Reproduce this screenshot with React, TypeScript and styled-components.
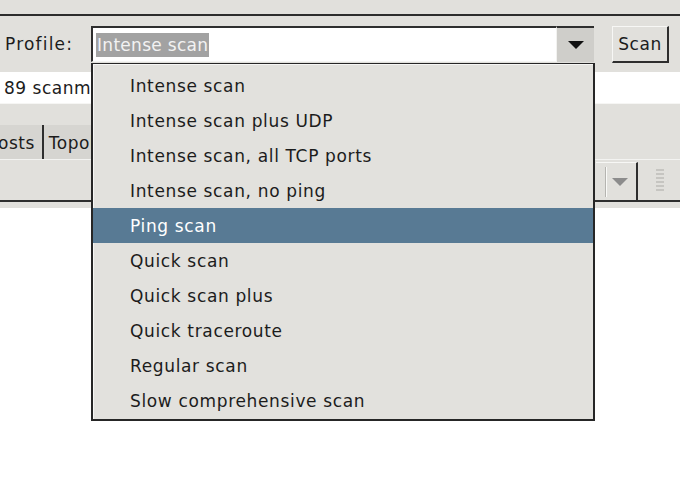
import React from 'react'
import styled, { createGlobalStyle } from 'styled-components'

const profiles = [
  'Intense scan',
  'Intense scan plus UDP',
  'Intense scan, all TCP ports',
  'Intense scan, no ping',
  'Ping scan',
  'Quick scan',
  'Quick scan plus',
  'Quick traceroute',
  'Regular scan',
  'Slow comprehensive scan',
]

const selected = 'Ping scan'

const App: React.FC = () => {
  return (
    <>
      <GlobalStyle />
      <Window>
        <TopStrip />
        <ProfileRow>
          <Label>Profile:</Label>
          <Combo>
            <Entry>
              <Selection>Intense scan</Selection>
            </Entry>
            <ArrowButton>
              <Triangle $color='#111' />
            </ArrowButton>
          </Combo>
          <ScanButton>Scan</ScanButton>
        </ProfileRow>
        <CommandRow>
          <span>89 scanme.nmap.org</span>
        </CommandRow>
        <Spacer />
        <TabsRow>
          <Tab>osts</Tab>
          <Tab>Topology</Tab>
        </TabsRow>
        <ToolbarRow>
          <FilterButton>
            <GrooveLine />
            <Triangle $color='#8c8c8c' />
          </FilterButton>
          <Grip>
            {[0, 1, 2, 3, 4, 5].map(i => <GripDot key={i} />)}
          </Grip>
        </ToolbarRow>
        <ToolbarTail />
        <Content />

        <Popup>
          {profiles.map(name => (
            <MenuItem key={name} $active={name === selected}>
              {name}
            </MenuItem>
          ))}
        </Popup>
      </Window>
    </>
  )
}

const GlobalStyle = createGlobalStyle`
  html, body {
    margin: 0;
    padding: 0;
    background: #ffffff;
  }
  body {
    font-family: 'DejaVu Sans', 'Liberation Sans', sans-serif;
    font-size: 17px;
    letter-spacing: 0.5px;
    color: #1c1c1c;
  }
`

const Window = styled.div`
  position: relative;
  width: 680px;
  height: 483px;
  overflow: hidden;
  display: flex;
  flex-direction: column;
  background: #e1e0dc;
`

const TopStrip = styled.div`
  height: 14px;
  flex: none;
  border-bottom: 2px solid #2c2c2c;
`

const ProfileRow = styled.div`
  height: 55px;
  flex: none;
  display: flex;
  align-items: center;
  padding: 1px 0 0 5px;
  box-sizing: border-box;
`

const Label = styled.span`
  width: 86px;
  letter-spacing: 1.2px;
`

const Combo = styled.div`
  display: flex;
  height: 36px;
  width: 503px;
`

const Entry = styled.div`
  flex: 1;
  background: #ffffff;
  border-top: 2px solid #2e2e2e;
  border-left: 2px solid #2e2e2e;
  border-bottom: 1px solid #f4f4f2;
  display: flex;
  align-items: center;
  padding-left: 3px;
`

const Selection = styled.span`
  background: #a2a2a2;
  color: #f2f2f2;
  padding: 2px 1px;
  letter-spacing: 0.3px;
`

const ArrowButton = styled.div`
  width: 37px;
  background: #cfceca;
  border-top: 2px solid #2e2e2e;
  border-left: 1px solid #f2f2f0;
  display: flex;
  align-items: center;
  justify-content: center;
`

const Triangle = styled.div<{ $color: string }>`
  width: 0;
  height: 0;
  border-left: 8px solid transparent;
  border-right: 8px solid transparent;
  border-top: 8px solid ${p => p.$color};
`

const ScanButton = styled.div`
  margin-left: 18px;
  width: 57px;
  height: 37px;
  box-sizing: border-box;
  border-top: 1px solid #f7f7f5;
  border-left: 1px solid #f7f7f5;
  border-right: 2px solid #2e2e2e;
  border-bottom: 2px solid #2e2e2e;
  display: flex;
  align-items: center;
  justify-content: center;
  letter-spacing: 0.6px;
`

const CommandRow = styled.div`
  height: 31px;
  flex: none;
  margin-top: 1px;
  background: #ffffff;
  display: flex;
  align-items: center;
  padding-left: 4px;
  white-space: nowrap;
  border-bottom: 1px solid #f6f6f4;
`

const Spacer = styled.div`
  height: 21px;
  flex: none;
`

const TabsRow = styled.div`
  height: 34px;
  flex: none;
  display: flex;
  border-bottom: 1px solid #f3f3f1;
`

const Tab = styled.div`
  background: #d6d5d1;
  display: flex;
  align-items: center;
  padding: 2px 7px 0 0;
  margin-left: -2px;
  & + & {
    margin-left: 0;
    border-left: 2px solid #2e2e2e;
    padding-left: 5px;
  }
`

const ToolbarRow = styled.div`
  height: 42px;
  flex: none;
  display: flex;
  justify-content: flex-end;
  align-items: stretch;
  border-bottom: 2px solid #2e2e2e;
  padding-right: 16px;
  box-sizing: border-box;
`

const FilterButton = styled.div`
  width: 40px;
  margin-top: 2px;
  border-top: 1px solid #f7f7f5;
  border-right: 2px solid #2e2e2e;
  display: flex;
  align-items: center;
  justify-content: center;
  gap: 5px;
`

const GrooveLine = styled.div`
  width: 1px;
  height: 30px;
  background: #b5b4b0;
  border-right: 1px solid #fafaf8;
`

const Grip = styled.div`
  margin-left: 18px;
  display: flex;
  flex-direction: column;
  justify-content: center;
  gap: 2px;
`

const GripDot = styled.div`
  width: 8px;
  height: 2px;
  background: #c6c5c1;
`

const ToolbarTail = styled.div`
  height: 6px;
  flex: none;
`

const Content = styled.div`
  flex: 1;
  background: #ffffff;
`

const Popup = styled.div`
  position: absolute;
  left: 91px;
  top: 63px;
  width: 504px;
  height: 358px;
  box-sizing: border-box;
  background: #e2e1dd;
  border: 2px solid #262626;
  border-top-width: 1px;
  box-shadow: inset 1px 1px 0 #f6f6f4;
  padding-top: 4px;
`

const MenuItem = styled.div<{ $active?: boolean }>`
  height: 35px;
  display: flex;
  align-items: center;
  padding-left: 37px;
  letter-spacing: 0.65px;
  background: ${p => (p.$active ? '#587a94' : 'transparent')};
  color: ${p => (p.$active ? '#ffffff' : '#1c1c1c')};
`

export default App
